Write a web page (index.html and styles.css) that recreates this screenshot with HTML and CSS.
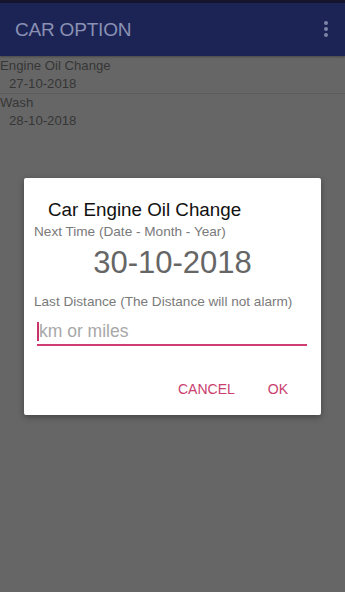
FILE: index.html
```html
<!DOCTYPE html>
<html>
<head>
<meta charset="utf-8">
<link rel="stylesheet" href="styles.css">
</head>
<body>
<div class="status"></div>
<header class="appbar">
  <span class="title">CAR OPTION</span>
  <span class="menu"><i></i><i></i><i></i></span>
</header>
<main class="list">
  <div class="item">
    <div class="name">Engine Oil Change</div>
    <div class="date">27-10-2018</div>
  </div>
  <div class="item">
    <div class="name">Wash</div>
    <div class="date">28-10-2018</div>
  </div>
</main>
<div class="overlay">
  <div class="dialog">
    <div class="dtitle">Car Engine Oil Change</div>
    <div class="label">Next Time (Date - Month - Year)</div>
    <div class="bigdate">30-10-2018</div>
    <div class="label label2">Last Distance (The Distance will not alarm)</div>
    <div class="field"><span class="caret"></span><span class="ph">km or miles</span></div>
    <div class="actions">
      <span class="btn">CANCEL</span>
      <span class="btn">OK</span>
    </div>
  </div>
</div>
</body>
</html>
```
FILE: styles.css
```css
html, body {
  margin: 0;
  padding: 0;
  height: 100%;
}
body {
  background: #666666;
  font-family: "Liberation Sans", Arial, sans-serif;
  position: relative;
  overflow: hidden;
}
.status {
  height: 3px;
  background: #17152c;
}
.appbar {
  height: 53px;
  background: #1c2456;
  display: flex;
  align-items: center;
  justify-content: space-between;
  padding: 0 17px 0 15px;
  box-shadow: 0 1px 2px rgba(0,0,0,0.3);
}
.title {
  color: #8a91b3;
  font-size: 19px;
  letter-spacing: -0.2px;
  margin-top: 1px;
}
.menu {
  display: flex;
  flex-direction: column;
  gap: 2px;
  margin-top: -2px;
}
.menu i {
  display: block;
  width: 4px;
  height: 4px;
  border-radius: 50%;
  background: #7d84a6;
}
.list {
  color: #363636;
  font-size: 13.2px;
}
.item {
  border-bottom: 1px solid #5c5c5c;
  padding-top: 2px;
}
.item + .item {
  border-bottom: none;
  padding-top: 1px;
}
.name {
  line-height: 16px;
}
.date {
  padding-left: 9px;
  line-height: 18px;
  margin-top: 1px;
}
.overlay {
  position: absolute;
  inset: 0;
  display: flex;
  justify-content: center;
  padding-top: 178px;
  align-items: flex-start;
}
.dialog {
  width: 297px;
  height: 237px;
  background: #ffffff;
  border-radius: 2px;
  box-shadow: 0 2px 6px rgba(0,0,0,0.35);
  box-sizing: border-box;
  padding: 21px 14px 0 10px;
  display: flex;
  flex-direction: column;
}
.dtitle {
  font-size: 18.8px;
  color: #111111;
  padding-left: 14px;
  line-height: 22px;
}
.label {
  font-size: 13.6px;
  color: #7a7a7a;
  line-height: 16px;
  margin-top: 3px;
}
.bigdate {
  font-size: 31px;
  color: #666666;
  text-align: center;
  line-height: 36px;
  margin-top: 5px;
  padding-left: 4px;
}
.label2 {
  margin-top: 13px;
}
.field {
  margin: 11px 0 0 3px;
  border-bottom: 2px solid #cf3d74;
  height: 23px;
  display: flex;
  align-items: flex-start;
  position: relative;
}
.caret {
  width: 2px;
  height: 19px;
  background: #c8336d;
  margin-top: 1px;
}
.ph {
  font-size: 17.5px;
  color: #a8a8a8;
  line-height: 20px;
}
.actions {
  display: flex;
  justify-content: flex-end;
  gap: 33px;
  padding-right: 19px;
  margin-top: 35px;
}
.btn {
  font-size: 14px;
  color: #c9406f;
  line-height: 16px;
}
```
